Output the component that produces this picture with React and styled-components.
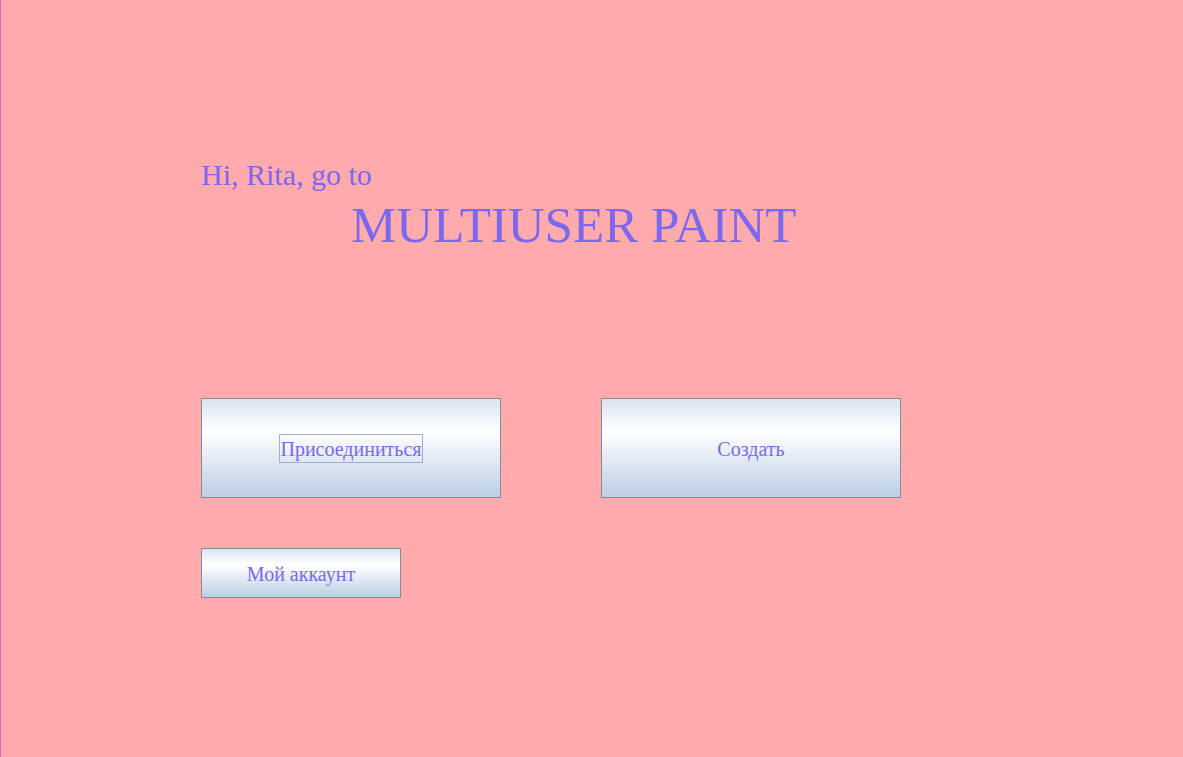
import React from "react";
import styled, { createGlobalStyle } from "styled-components";

const Global = createGlobalStyle`
  html, body { margin: 0; padding: 0; background: #ffaaad; }
  #root { min-height: 757px; }
`;

const Page = styled.div`
  box-sizing: border-box;
  min-height: 757px;
  background: #ffaaad;
  border-left: 1px solid #e060d8;
  padding: 158px 0 0 200px;
  font-family: "Liberation Serif", "Times New Roman", serif;
  color: #7b68ee;
  display: flex;
  flex-direction: column;
  align-items: flex-start;
`;

const Greeting = styled.div`
  font-size: 30px;
  line-height: 34px;
`;

const Title = styled.h1`
  margin: 4px 0 0 150px;
  font-weight: normal;
  font-size: 51px;
  line-height: 58px;
`;

const ButtonRow = styled.div`
  display: flex;
  gap: 100px;
  margin-top: 144px;
`;

const Button = styled.button`
  box-sizing: border-box;
  width: ${(p) => (p.$small ? "200px" : "300px")};
  height: ${(p) => (p.$small ? "50px" : "100px")};
  border: 1px solid #888c94;
  border-radius: 0;
  background: linear-gradient(
    to bottom,
    #d9e4f0 0%,
    #ffffff 33%,
    #e4ebf4 60%,
    #bccfe4 100%
  );
  font-family: "Liberation Serif", "Times New Roman", serif;
  font-size: 20px;
  color: #7b68ee;
  padding: 0;
  cursor: pointer;
  display: flex;
  align-items: center;
  justify-content: center;
`;

const Label = styled.span`
  box-sizing: border-box;
  padding: 4px 0 2px;
  border: 1px solid ${(p) => (p.$focused ? "#a4aad4" : "transparent")};
  line-height: 21px;
`;

const AccountRow = styled.div`
  margin-top: 50px;
`;

export default function App() {
  return (
    <>
      <Global />
      <Page>
        <Greeting>Hi, Rita, go to</Greeting>
        <Title>MULTIUSER PAINT</Title>
        <ButtonRow>
          <Button>
            <Label $focused>Присоединиться</Label>
          </Button>
          <Button>
            <Label>Создать</Label>
          </Button>
        </ButtonRow>
        <AccountRow>
          <Button $small>
            <Label>Мой аккаунт</Label>
          </Button>
        </AccountRow>
      </Page>
    </>
  );
}
